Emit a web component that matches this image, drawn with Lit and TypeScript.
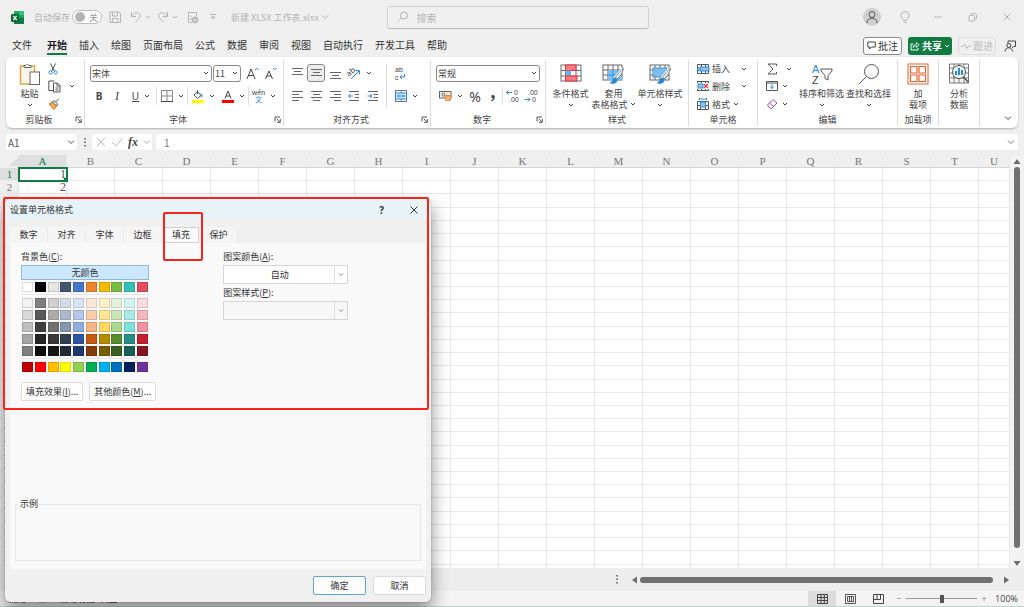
import { LitElement, html, svg, css, nothing } from "lit";
import { customElement } from "lit/decorators.js";
import { classMap } from "lit/directives/class-map.js";

const icon = (w: number, h: number, body: unknown) =>
  html`<svg class="icon" width=${w} height=${h} viewBox="0 0 ${w} ${h}" aria-hidden="true">${body}</svg>`;

const chev = () => icon(6, 6, svg`<path d="M1 2l2 2 2-2" fill="none" stroke="currentColor"/>`);
const bigChev = () => icon(8, 8, svg`<path d="M1 2.500l3 3 3-3" fill="none" stroke="currentColor"/>`);

const G = "#666";
const B = "#2b88d8";

const lines = (rows: number[][]) =>
  icon(12, 12, svg`${rows.map(([x, y, w]) => svg`<path d="M${x} ${y}h${w}" stroke=${G} />`)}`);

const gridLines = svg`<rect x="1" y="1" width="19" height="15" fill="#fff" stroke=${G}/><path d="M1 6h19M1 11h19M6 1v15M11 1v15M16 1v15" stroke=${G} fill="none"/>`;
const brush = svg`<path d="M21 5l-8 10" stroke="#fff" stroke-width="4"/><path d="M21.500 4.500c-3 2-6 6-8 9l1.500 1.500c3-3 6-7 6.500-10.500z" fill="#fff" stroke="#555" stroke-width=".8"/><path d="M13.500 13.500c-3 .5-2.500 4-6 5.500 3 1.500 8 1 8-3.500z" fill=${B}/>`;

const art = {
  excel: () => icon(13, 13, svg`<rect x="3" y="0" width="10" height="13" rx="1" fill="#21a366"/><path d="M8 0h4l1 1v3H8z" fill="#33c481"/><path d="M3 7h10v5q0 1-1 1H4q-1 0-1-1z" fill="#107c41"/><rect x="0" y="3" width="8" height="8" rx="1" fill="#0b6b38"/><path d="M2.300 4.800l3.400 4.400M5.700 4.800L2.300 9.200" stroke="#fff" stroke-width="1.200"/>`),
  save: () => icon(12, 12, svg`<path d="M1 1h9l1.500 1.500v9H1zM3.500 1v4h5V1M3.500 11.500V7.500h5.500v4" fill="none" stroke="currentColor"/>`),
  undo: () => icon(12, 12, svg`<path d="M1.500 1v4.500H6M1.800 5C5 .5 10 1 10.300 4.500c.2 2.500-2.300 4-4.800 6.500" fill="none" stroke="currentColor"/>`),
  redo: () => icon(12, 12, svg`<path d="M10.500 1v4.500H6M10.200 5C7 .5 2 1 1.700 4.500c-.2 2.500 2.300 4 4.800 6.500" fill="none" stroke="currentColor"/>`),
  docView: () => icon(12, 13, svg`<path d="M5 11.500H1.500v-10h8v4" fill="none" stroke="currentColor"/><path d="M3 5h2M3 8h2" stroke="currentColor"/><circle cx="8" cy="9" r="2.500" fill="none" stroke="currentColor" stroke-width="1.500"/><path d="M4.500 9h7M8 5.500v7" stroke="currentColor" stroke-width=".6"/>`),
  custom: () => icon(6, 6, svg`<path d="M0 .5h6M1 3l2 2 2-2z" fill="none" stroke="currentColor"/>`),
  search: () => icon(12, 12, svg`<circle cx="7" cy="4.500" r="3.500" fill="none" stroke="currentColor"/><path d="M4.500 7L1 10.500" stroke="currentColor"/>`),
  user: () => icon(18, 18, svg`<circle cx="9" cy="9" r="9" fill="#cfcfcf"/><circle cx="9" cy="6.500" r="3" fill="none" stroke="#555"/><path d="M4 15c0-6.500 10-6.500 10 0" fill="none" stroke="#555"/>`),
  bulb: () => icon(10, 13, svg`<path d="M3.500 9.500C3.300 7.500 1 7 1 4.500a4 4 0 0 1 8 0C9 7 6.700 7.500 6.500 9.500zM3.500 11.500h3" fill="none" stroke="currentColor"/>`),
  min: () => icon(8, 8, svg`<path d="M0 4h8" stroke="currentColor"/>`),
  restore: () => icon(9, 9, svg`<rect x="1" y="2.500" width="5.500" height="5.500" rx="1" fill="none" stroke="currentColor"/><path d="M3 2.500V1.500q0-1 1-1h2.500q2 0 2 2V5q0 1-1 1h-1" fill="none" stroke="currentColor"/>`),
  close: () => icon(8, 8, svg`<path d="M.5.5l7 7M7.500.5l-7 7" stroke="currentColor"/>`),
  comment: () => icon(9, 9, svg`<path d="M.8 1h7.500v5H4.500L2.500 8V6H.8z" fill="none" stroke="#444"/>`),
  share: () => icon(10, 10, svg`<path d="M3.500 3H1v6h7V7" fill="none" stroke="#fff"/><path d="M3 6.500C3.500 4 5 3.500 6.500 3.500V1.500L9.200 4 6.500 6.500v-1.500Q4.500 5 3 6.500z" fill="none" stroke="#fff" stroke-width=".8"/>`),
  pulse: () => icon(10, 8, svg`<path d="M0 4.500h2L3.500 2l2.500 4.500L7.500 4H10" fill="none" stroke="currentColor"/>`),
  present: () => icon(12, 12, svg`<path d="M4 3.500V1h7.500v5.500H9.500L8 8" fill="none" stroke="#444"/><circle cx="4.800" cy="5.500" r="2" fill="none" stroke="#444"/><path d="M1 11.500c0-5 7.500-5 7.500 0" fill="none" stroke="#444"/>`),
  paste: () => icon(22, 23, svg`<rect x="1.500" y="3" width="14" height="18" fill="#fdf6ec" stroke="#e9a23b" stroke-width="1.500"/><path d="M5 4V2.500h2q1.500-3 3 0h2V4.500H5z" fill="#fff" stroke=${G}/><rect x="11" y="9" width="9.500" height="12.500" fill="#fff" stroke=${G}/>`),
  cut: () => icon(10, 12, svg`<path d="M2.500.5l4 8M7.500.5l-4 8" stroke="#555"/><circle cx="2.500" cy="9.500" r="1.600" fill="none" stroke=${B}/><circle cx="7.500" cy="9.500" r="1.600" fill="none" stroke=${B}/>`),
  copy: () => icon(13, 13, svg`<path d="M5 10.500H.8V1h5.700" fill="none" stroke="#555"/><path d="M5.500 3h4l2.500 2.500v6.500H5.500zM9 3v3h3M7.500 8h3M7.500 10h3" fill="none" stroke="#555"/>`),
  painter: () => icon(12, 12, svg`<path d="M1 6l5 5.500 3-4-4-4z" fill="#f4a85e" stroke="#e0701a"/><path d="M4.500 4L6 2.500 9.500 6 8.500 8zM7.500 4l3.500-3.500" fill="#fff" stroke="#555"/>`),
  grow: (up: boolean) => icon(13, 13, svg`<path d="${up ? "M1 12L5 2l4 10M2.300 8.500h5.400" : "M1.500 12L5 4l3.500 8M2.700 9h4.600"}" fill="none" stroke="#444"/><path d="${up ? "M9 3l1.800-1.800L12.500 3" : "M9 1l1.800 1.800L12.500 1"}" fill="none" stroke=${B}/>`),
  border: () => icon(12, 12, svg`<path d="M.5.5h11M.5.5v11M11.500.5v11M6 .5v11M.5 6h11" stroke="#888"/><path d="M0 11.500h12" stroke="#444"/>`),
  fill: () => icon(12, 13, svg`<path d="M5.500 1.500L9 5.500 5.500 8.500 2 5z" fill="#fff" stroke="#555"/><path d="M5.500 0v4" stroke="#555"/><path d="M8.500 3q3 1.500 1.500 5-1-1.500-1-3z" fill=${B}/><rect x="0" y="10" width="12" height="3" fill="#ff0"/>`),
  fontColor: () => icon(12, 13, svg`<path d="M3 8.500L6 1l3 7.500M4 6h4" fill="none" stroke="#444"/><rect x="0" y="10" width="12" height="3" fill="#f00"/>`),
  orient: () => icon(13, 13, svg`<text x="-1" y="7" font-size="8" transform="rotate(-40 4 6)" fill="#444" font-family="Noto Sans">ab</text><path d="M3 12L11 4M7.500 3.500H11.500V7.500" fill="none" stroke=${B}/>`),
  wrap: () => icon(12, 14, svg`<text x="1" y="6" font-size="7" fill="#444" font-family="Liberation Sans">ab</text><text x="1" y="14" font-size="7" fill="#444" font-family="Liberation Sans">c</text><path d="M10.500 8v3H6M8 9l-2 2 2 2" fill="none" stroke=${B}/>`),
  merge: () => icon(12, 12, svg`<rect x=".5" y=".5" width="11" height="11" fill="#fff" stroke="#777"/><path d="M6 .5v11" stroke="#777"/><rect x=".5" y="3" width="11" height="6" fill="#cfe6fa" stroke=${B}/><path d="M2.500 6h7M4 4.500L2.500 6 4 7.500M8 4.500L9.500 6 8 7.500" fill="none" stroke=${B}/>`),
  indent: (out: boolean) => icon(12, 12, svg`<path d="M1 1.500h10M6.500 4.500H11M6.500 7.500H11M1 10.500h10" stroke=${G}/><path d="${out ? "M.5 6H5M2.500 4L.5 6l2 2" : "M.5 6H5M3 4l2 2-2 2"}" fill="none" stroke=${B}/>`),
  money: () => icon(13, 12, svg`<rect x=".5" y="1.500" width="11.500" height="6.500" fill="#eee" stroke=${G}/><circle cx="4.500" cy="4.700" r="1.500" fill="none" stroke=${G}/><rect x="6" y="5" width="6" height="6" rx="1.500" fill="#f0862b"/><path d="M7 7.200h4M7 9.200h4" stroke="#fff" stroke-width=".7"/>`),
  dec: (left: boolean) => icon(12, 14, svg`<text x=${left ? 8 : 4} y="6" font-size="7" fill="#444" font-family="Liberation Sans">${left ? "0" : ".00"}</text><text x=${left ? 3 : 8} y="13" font-size="7" fill="#444" font-family="Liberation Sans">${left ? ".00" : "0"}</text><path d="${left ? "M.5 3.500H6M2.500 1.500l-2 2 2 2" : "M.5 10.500H6M4 8.500l2 2-2 2"}" fill="none" stroke=${B}/>`),
  cond: () => icon(22, 20, svg`<rect x="1" y="1" width="20" height="16" fill="#fff" stroke=${G}/><path d="M1 6.500h20M1 12h20M5.500 1v16M16 1v16" stroke=${G}/><rect x="5.500" y="1" width="10.500" height="5.500" fill="#ff7a80" stroke="#d9363e"/><rect x="5.500" y="6.500" width="5.500" height="5.500" fill="#6cb3ee"/><rect x="5.500" y="12" width="11.500" height="5" fill="#ff7a80" stroke="#d9363e"/>`),
  tableStyle: () => icon(23, 20, svg`${gridLines}<rect x="6" y="6" width="14" height="10" fill="#7dbcf0"/><path d="M6 11h14M11 6v10M16 6v10" stroke=${B} stroke-width=".7"/>${brush}`),
  cellStyle: () => icon(23, 20, svg`${gridLines}<rect x="4" y="4" width="14" height="9" fill="#7dbcf0" stroke="#4a94d0"/>${brush}`),
  insert: () => icon(12, 12, svg`<path d="M.5 1.500h11v9H.5zM4.500 1.500v9M8.500 1.500v9" fill="none" stroke="#555"/><rect x="3" y="4" width="9" height="4" fill="#8cc5f2" stroke=${B}/><path d="M4 6H0M2 4L0 6l2 2" fill="none" stroke=${B}/>`),
  remove: () => icon(12, 12, svg`<path d="M.5 1.500h11M.5 10.500h11M.5 1v2M4.500 1v2M8.500 1v2M.5 9v2M4.500 9v2M8.500 9v2M11.500 1v2M11.500 9v2" stroke="#555"/><rect x="1" y="4" width="5" height="4" fill="#8cc5f2" stroke=${B}/><path d="M7 4l4 4M11 4L7 8" stroke="#e03a3e" stroke-width="1.200"/>`),
  format: () => icon(12, 12, svg`<path d="M.5 3.500h11v8H.5zM3.500 3.500v8M8.500 3.500v8M.5 7.500h11" fill="none" stroke="#555"/><rect x="3.500" y="4" width="5" height="5" fill="#8cc5f2" stroke=${B}/><path d="M2.500 1h7M2.500 0v2M9.500 0v2" stroke=${B}/>`),
  sigma: () => icon(12, 12, svg`<path d="M10.500 3V1H2l5 5-5 5h8.500V9" fill="none" stroke="#555"/>`),
  fillDown: () => icon(12, 12, svg`<path d="M.5 1.500h11v9H.5zM.5 3h11" fill="none" stroke="#555"/><path d="M6 4v4.500M4 6.500l2 2 2-2" fill="none" stroke=${B}/>`),
  eraser: () => icon(12, 12, svg`<path d="M1.500 7L7 1.500 11 5 5.500 10.500H4zM3.500 5L8 9" fill="#fff" stroke="#a64bb8"/>`),
  sort: () => icon(22, 22, svg`<text x="1" y="10" font-size="11" fill=${B} font-family="Liberation Sans">A</text><text x="1" y="21" font-size="11" fill="#444" font-family="Liberation Sans">Z</text><path d="M10 6h11v2l-4 4.500V17l-3-1.500v-3L10 8z" fill="none" stroke="#555"/>`),
  find: () => icon(22, 22, svg`<circle cx="13.500" cy="8.500" r="7" fill="#fbfbfb" stroke="#555"/><path d="M8.500 13.500L1 21" stroke="#555"/>`),
  addin: () => icon(22, 22, svg`<rect x="1" y="1" width="20" height="20" fill="#fff" stroke="#e8602c"/><path d="M3.500 3.500h6.500v6.500H3.500zM12 3.500h6.500v6.500H12zM3.500 12h6.500v6.500H3.500zM12 12h6.500v6.500H12z" fill="none" stroke="#e8602c" stroke-width="1.200"/>`),
  analyze: () => icon(22, 22, svg`<path d="M1.500 1h19v19h-19zM1.500 5h19M1.500 10h19M1.500 15h19M6 1v19M11 1v19M16 1v19" fill="#fff" stroke="#777"/><circle cx="11" cy="9" r="6.500" fill="#f3f8fc" stroke="#555"/><path d="M8 8v4M11 5v7M14 7v5" stroke=${B} stroke-width="2"/><path d="M15.500 14l5 5.500" stroke="#555" stroke-width="1.500"/>`),
  launcher: () => icon(7, 7, svg`<path d="M1 5.500V1h5M2.800 2.800L6 6M6.300 3v3.300H3" fill="none" stroke="#555"/>`),
  dots: () => icon(2, 9, svg`<path d="M1 0v9" stroke="#555" stroke-width="1.500" stroke-dasharray="1.500 2"/>`),
  cancel: () => icon(10, 10, svg`<path d="M1 1l8 8M9 1L1 9" stroke="#bbb"/>`),
  ok: () => icon(12, 10, svg`<path d="M1 5l4 4 6.500-8" fill="none" stroke="#bbb"/>`),
  corner: () => icon(10, 9, svg`<path d="M10 0v9H0z" fill="#dcdcdc"/>`),
  tri: (d: string) => icon(8, 8, svg`<path d=${d} fill="#6b6b6b"/>`),
  viewGrid: () => icon(11, 10, svg`<path d="M.5.5h10v9H.5zM.5 3.500h10M.5 6.500h10M4 .5v9M7.300.5v9" fill="none" stroke="#444"/>`),
  viewPage: () => icon(11, 10, svg`<path d="M.5.5h10v9H.5zM2.500 2.500h6v5h-6zM4.500 2.500v5M6.500 2.500v5" fill="none" stroke="#555"/>`),
  viewBreak: () => icon(11, 10, svg`<path d="M.5.5h10v9H.5zM.5 5.500h7v-5M4 .5v5" fill="none" stroke="#444"/>`),
};

const menus = ["文件", "开始", "插入", "绘图", "页面布局", "公式", "数据", "审阅", "视图", "自动执行", "开发工具", "帮助"];
const columns = [..."ABCDEFGHIJKLMNOPQRSTU"];
const rowNumbers = Array.from({ length: 30 }, (_, i) => i + 1);

const themeTop = ["#ffffff", "#000000", "#e7e6e6", "#44546a", "#4874cb", "#ee822f", "#f2ba02", "#75bd42", "#30c0b4", "#e54c5e"];
const themeTints = [
  ["#f2f2f2", "#7f7f7f", "#d0cece", "#d6dce5", "#dae3f5", "#fce6d5", "#fff2ca", "#e3f2d9", "#d3f5f2", "#fadbdf"],
  ["#d8d8d8", "#595959", "#aeabab", "#adb9ca", "#b6c7ea", "#f8cdac", "#ffe694", "#c8e5b3", "#a7ebe6", "#f5b7bf"],
  ["#bfbfbf", "#3f3f3f", "#757070", "#8497b0", "#91acdf", "#f5b482", "#ffd95f", "#acd78e", "#7be1d9", "#ef949e"],
  ["#a5a5a5", "#262626", "#3a3838", "#333f50", "#2e54a1", "#c55a11", "#b68b02", "#588e31", "#249087", "#c81d31"],
  ["#7f7f7f", "#0c0c0c", "#171616", "#222a35", "#1f386b", "#843c0b", "#795d01", "#3a5f21", "#18605a", "#851321"],
];
const standard = ["#c00000", "#ff0000", "#ffc000", "#ffff00", "#92d050", "#00b050", "#00b0f0", "#0070c0", "#002060", "#7030a0"];

const shared = css`
  :host, * { box-sizing: border-box; }
  button, select, input {
    font: inherit; color: inherit; background: none; border: 0; margin: 0; padding: 0;
    appearance: none; border-radius: 0; min-width: 0; outline: none;
  }
  button { display: flex; align-items: center; justify-content: center; white-space: nowrap; }
  .icon { display: block; flex: none; overflow: visible; }
  .pick { display: grid; align-items: center; background: #fff; }
  .pick > select { grid-area: 1 / 1; width: 100%; height: 100%; }
  .pick > .icon { grid-area: 1 / 1; justify-self: end; margin-right: 2px; pointer-events: none; }
`;

@customElement("title-bar")
class TitleBar extends LitElement {
  static styles = [shared, css`
    :host { display: grid; grid-template-columns: 1fr minmax(120px, 262px) 1fr; align-items: center; height: 34px; padding-left: 11px; color: #b4b4b4; font-size: 9px; }
    .side { display: flex; align-items: center; white-space: nowrap; min-width: 0; }
    .auto { display: flex; align-items: center; gap: 2px; margin: 0 7px 0 10px; }
    .toggle { width: 30px; height: 14px; border: 1px solid #bcbcbc; border-radius: 7px; background: #fff; justify-content: flex-start; gap: 4px; padding-left: 2px; color: #999; }
    .knob { width: 10px; height: 10px; border-radius: 5px; background: #b5b5b5; }
    .save { margin-right: 9px; }
    .pair { display: flex; gap: 3px; margin-right: 6px; align-items: center; }
    .doc { margin: 0 11px 0 3px; }
    .name { display: flex; align-items: center; gap: 2px; margin-left: 15px; }
    .search { display: flex; align-items: center; gap: 8px; height: 23px; border: 1px solid #d2d2d2; border-bottom-color: #bbb; border-radius: 3px; padding: 0 9px; font-size: 10px; background: #f0f0f0; }
    .search input { flex: 1; }
    .search input::placeholder { color: #b4b4b4; opacity: 1; }
    .right { justify-content: flex-end; padding-right: 13px; gap: 26px; }
    .user { margin-right: -7px; }
    .user + button { margin-right: -2px; }
  `];
  render() {
    return html`
      <div class="side">
        ${art.excel()}
        <div class="auto"><span id="auto">自动保存</span>
          <button class="toggle" role="switch" aria-checked="false" aria-labelledby="auto"><span class="knob"></span>关</button></div>
        <button class="save" aria-label="保存">${art.save()}</button>
        <button class="pair" aria-label="撤消">${art.undo()}${chev()}</button>
        <button class="pair" aria-label="恢复">${art.redo()}${chev()}</button>
        <button class="doc" aria-label="预览">${art.docView()}</button>
        <button aria-label="自定义">${art.custom()}</button>
        <button class="name">新建 XLSX 工作表.xlsx ${bigChev()}</button>
      </div>
      <label class="search">${art.search()}<input type="text" placeholder="搜索" aria-label="搜索" /></label>
      <div class="side right">
        <button class="user" aria-label="帐户">${art.user()}</button>
        <button aria-label="提示">${art.bulb()}</button>
        <button aria-label="最小化">${art.min()}</button>
        <button aria-label="还原">${art.restore()}</button>
        <button aria-label="关闭">${art.close()}</button>
      </div>`;
  }
}

@customElement("menu-bar")
class MenuBar extends LitElement {
  static styles = [shared, css`
    :host { display: flex; align-items: center; justify-content: space-between; height: 23px; padding: 0 8px 0 12px; font-size: 10px; color: #333; }
    nav { display: flex; gap: 12px; }
    nav button { height: 18px; line-height: 16px; border-bottom: 2px solid transparent; }
    nav button:first-child { margin-right: 3px; }
    nav .on { font-weight: 700; border-color: #107c41; color: #222; }
    .tools { display: flex; align-items: center; gap: 6px; }
    .tools button { height: 18px; border-radius: 3px; gap: 2px; padding: 0 2px; }
    .tools .note { background: #fff; border: 1px solid #8a8a8a; padding: 0 3px; }
    .tools .share { background: #107c41; color: #fff; font-weight: 700; }
    .tools .follow { border: 1px solid #dcdcdc; color: #bdbdbd; }
    .tools .show { padding: 0; margin-left: 2px; }
  `];
  render() {
    return html`
      <nav>${menus.map((m) => html`<button class=${classMap({ on: m === "开始" })}>${m}</button>`)}</nav>
      <div class="tools">
        <button class="note">${art.comment()}批注</button>
        <button class="share">${art.share()}共享${chev()}</button>
        <button class="follow" disabled>${art.pulse()}跟进</button>
        <button class="show" aria-label="演示">${art.present()}</button>
      </div>`;
  }
}

const center = [[1, 1.5, 11], [3, 4.5, 7], [1, 7.5, 11], [3, 10.5, 7]];

@customElement("ribbon-bar")
class RibbonBar extends LitElement {
  static styles = [shared, css`
    :host { display: flex; margin: 0 6px; height: 71px; background: #fff; border-radius: 6px; box-shadow: 0 1px 2px #0004; font-size: 9px; color: #444; line-height: 11px; padding: 3px 0 2px; }
    section { display: flex; flex-direction: column; border-right: 1px solid #dcdcdc; flex: none; }
    .body { flex: 1; display: flex; min-height: 0; }
    footer { display: flex; align-items: center; height: 13px; }
    footer span { flex: 1; text-align: center; }
    footer button { width: 12px; }
    .clip { width: 79px; } .font { width: 199px; } .align { width: 147px; } .num { width: 115px; }
    .styles { width: 143px; } .cells { width: 69px; } .edit { width: 140px; } .add { width: 41px; }
    .end { flex: 1; display: flex; justify-content: flex-end; align-items: flex-end; padding: 0 6px 4px; }
    .big { flex-direction: column; justify-content: flex-start; padding-top: 3px; }
    .big .icon:first-child { margin-bottom: 2px; }
    .big > .icon:last-child:not(:first-child) { margin-top: 3px; }
    .big span { display: flex; align-items: center; gap: 2px; }
    .fixed { height: 23px; display: flex; align-items: center; margin-bottom: 2px; }
    .stack { display: flex; flex-direction: column; justify-content: space-around; }
    .stack button { height: 17px; justify-content: flex-start; gap: 3px; }
    .rows { display: flex; flex-direction: column; gap: 5px; padding-top: 4px; }
    .row { display: flex; align-items: center; height: 18px; }
    .row button { width: 18px; height: 18px; }
    .row .w { width: 30px; gap: 5px; }
    .pick { height: 17px; border: 1px solid #8a8a8a; border-radius: 3px; }
    .pick > select { padding-left: 1px; }
    .sep { width: 1px; height: 18px; background: #dcdcdc; flex: none; }
    .tall { height: 44px; margin: 4px 4px 0; }
    .row .framed { background: #ececec; border: 1px solid #888; border-radius: 3px; }
    .row .b { font: 700 10px "Noto Sans"; } .row .i { font: italic 12px "Liberation Serif"; } .u { text-decoration: underline; font-family: "Noto Sans"; font-size: 10px; }
    .row .pct { font: 14px "Noto Sans"; } .row .comma { font: 700 20px "Liberation Serif"; padding-bottom: 9px; }
    .pinyin { display: flex; flex-direction: column; font-size: 7px; line-height: 7px; }
    .pinyin em { font-style: normal; color: #2b88d8; }
    .clip .big { width: 23px; margin-left: 12px; }
    .clip .stack { margin-left: 7px; width: 34px; }
    .clip .stack .w { gap: 8px; }
    .font .rows, .num .rows { padding-left: 5px; }
    .family { width: 122px; margin-right: 1px; } .size { width: 28px; margin-right: 2px; }
    .align .rows { padding-left: 4px; }
    .align .rows .row { gap: 1px; }
    .align .rows + .tall + .rows { padding-left: 0; }
    .format { width: 104px; }
    .styles .body { padding-left: 3px; }
    .styles .big { width: 43px; } .styles .big:last-child { width: 50px; }
    .cells .body { padding-left: 8px; }
    .cells .stack .wide > .icon:last-child { margin-left: 8px; }
    .edit .body { padding-left: 8px; }
    .edit .stack { width: 32px; }
    .edit .stack button { gap: 4px; }
    .edit .stack button:first-child { gap: 8px; }
    .edit .big { width: 47px; }
    .add .big { width: 40px; }
  `];
  private foot(name: string, launch = false) {
    return html`<footer><span>${name}</span>${launch ? html`<button aria-label="${name}设置">${art.launcher()}</button>` : nothing}</footer>`;
  }
  render() {
    return html`
      <section class="clip"><div class="body">
        <button class="big">${art.paste()}<span>粘贴</span>${chev()}</button>
        <div class="stack">
          <button aria-label="剪切">${art.cut()}</button>
          <button class="w" aria-label="复制">${art.copy()}${chev()}</button>
          <button aria-label="格式刷">${art.painter()}</button>
        </div></div>${this.foot("剪贴板", true)}</section>

      <section class="font"><div class="body"><div class="rows">
        <div class="row">
          <div class="pick family"><select aria-label="字体"><option>宋体</option></select>${chev()}</div>
          <div class="pick size"><select aria-label="字号"><option>11</option></select>${chev()}</div>
          <button aria-label="增大字号">${art.grow(true)}</button>
          <button aria-label="减小字号">${art.grow(false)}</button>
        </div>
        <div class="row">
          <button class="b">B</button><button class="i">I</button>
          <button class="w"><span class="u">U</span>${chev()}</button><div class="sep"></div>
          <button class="w" aria-label="边框">${art.border()}${chev()}</button><div class="sep"></div>
          <button class="w" aria-label="填充颜色">${art.fill()}${chev()}</button>
          <button class="w" aria-label="字体颜色">${art.fontColor()}${chev()}</button><div class="sep"></div>
          <button class="w"><span class="pinyin">wén<em>文</em></span>${chev()}</button>
        </div></div></div>${this.foot("字体", true)}</section>

      <section class="align"><div class="body">
        <div class="rows">
          <div class="row">
            <button aria-label="顶端对齐">${lines([[1, 1.5, 11], [3, 4.5, 7], [1, 7.5, 11]])}</button>
            <button class="framed" aria-label="垂直居中">${lines([[1, 2.5, 11], [3, 5.5, 7], [1, 8.5, 11]])}</button>
            <button aria-label="底端对齐">${lines([[1, 5.5, 11], [3, 8.5, 7], [1, 11.5, 11]])}</button>
            <button class="w" aria-label="方向">${art.orient()}${chev()}</button>
          </div>
          <div class="row">
            <button aria-label="左对齐">${lines([[1, 1.5, 11], [1, 4.5, 7], [1, 7.5, 11], [1, 10.5, 7]])}</button>
            <button aria-label="居中">${lines(center)}</button>
            <button aria-label="右对齐">${lines([[1, 1.5, 11], [5, 4.5, 7], [1, 7.5, 11], [5, 10.5, 7]])}</button>
            <button aria-label="减少缩进量">${art.indent(true)}</button>
            <button aria-label="增加缩进量">${art.indent(false)}</button>
          </div></div>
        <div class="sep tall"></div>
        <div class="rows">
          <div class="row"><button aria-label="自动换行">${art.wrap()}</button></div>
          <div class="row"><button class="w" aria-label="合并后居中">${art.merge()}${chev()}</button></div>
        </div></div>${this.foot("对齐方式", true)}</section>

      <section class="num"><div class="body"><div class="rows">
        <div class="row"><div class="pick format"><select aria-label="数字格式"><option>常规</option></select>${chev()}</div></div>
        <div class="row">
          <button class="w" aria-label="会计格式">${art.money()}${chev()}</button>
          <button class="pct">%</button><button class="comma">,</button><div class="sep"></div>
          <button aria-label="增加小数位数">${art.dec(true)}</button>
          <button aria-label="减少小数位数">${art.dec(false)}</button>
        </div></div></div>${this.foot("数字", true)}</section>

      <section class="styles"><div class="body">
        <button class="big"><div class="fixed">${art.cond()}</div><span>条件格式</span>${chev()}</button>
        <button class="big"><div class="fixed">${art.tableStyle()}</div><span>套用</span><span>表格格式${chev()}</span></button>
        <button class="big"><div class="fixed">${art.cellStyle()}</div><span>单元格样式</span>${chev()}</button>
      </div>${this.foot("样式")}</section>

      <section class="cells"><div class="body"><div class="stack">
        <button class="wide">${art.insert()}插入 ${chev()}</button>
        <button class="wide">${art.remove()}删除 ${chev()}</button>
        <button>${art.format()}格式${chev()}</button>
      </div></div>${this.foot("单元格")}</section>

      <section class="edit"><div class="body"><div class="stack">
        <button aria-label="求和">${art.sigma()}${chev()}</button>
        <button aria-label="填充">${art.fillDown()}${chev()}</button>
        <button aria-label="清除">${art.eraser()}${chev()}</button></div>
        <button class="big"><div class="fixed">${art.sort()}</div><span>排序和筛选</span>${chev()}</button>
        <button class="big"><div class="fixed">${art.find()}</div><span>查找和选择</span>${chev()}</button>
      </div>${this.foot("编辑")}</section>

      <section class="add"><div class="body"><button class="big"><div class="fixed">${art.addin()}</div><span>加</span><span>载项</span></button></div>${this.foot("加载项")}</section>
      <section class="add"><div class="body"><button class="big"><div class="fixed">${art.analyze()}</div><span>分析</span><span>数据</span></button></div>${this.foot("")}</section>
      <div class="end"><button aria-label="折叠功能区">${bigChev()}</button></div>`;
  }
}

@customElement("formula-bar")
class FormulaBar extends LitElement {
  static styles = [shared, css`
    :host { display: flex; align-items: center; margin: 6px 6px 5px; height: 16px; font-size: 10px; color: #555; }
    .box { background: #fff; border-radius: 3px; height: 16px; display: flex; align-items: center; }
    .name { width: 71px; padding: 0 2px; }
    .name input, .text input { flex: 1; }
    .dots { width: 15px; display: flex; justify-content: center; }
    .acts { width: 60px; justify-content: space-between; padding: 0 1px 0 4px; margin-right: 4px; color: #aaa; }
    .acts .fx { font: italic 700 12px "Liberation Serif"; color: #444; }
    .text { flex: 1; padding: 0 3px 0 8px; color: #777; }
  `];
  render() {
    return html`
      <div class="box name"><input aria-label="名称框" .value=${"A1"} />${bigChev()}</div>
      <div class="dots">${art.dots()}</div>
      <div class="box acts"><button aria-label="取消">${art.cancel()}</button><button aria-label="输入">${art.ok()}</button><button class="fx">fx</button>${bigChev()}</div>
      <div class="box text"><input aria-label="编辑栏" .value=${"1"} />${bigChev()}</div>`;
  }
}

@customElement("sheet-grid")
class SheetGrid extends LitElement {
  static styles = [shared, css`
    :host { display: grid; grid-template-columns: 1fr 14px; grid-template-rows: minmax(0, 1fr) 23px; min-height: 0; flex: 1; }
    .view { overflow: hidden; background: #fff; }
    table { width: 100%; height: 100%; table-layout: fixed; border-collapse: separate; border-spacing: 0; font: 12px/12px "Liberation Serif", "Noto Sans CJK SC", serif; color: #555; }
    th, td { padding: 0; overflow: hidden; border-right: 1px solid #e8e8e8; border-bottom: 1px solid #e8e8e8; font-weight: 400; }
    th { font-size: 11px; background: #efefef; color: #777; }
    thead th { height: 13px; border-bottom-color: #d5d5d5; }
    tbody th { padding-left: 1px; }
    thead .on, tbody .on { background: #dedede; color: #107c41; }
    thead .corner { border: 0; }
    .corner .icon { margin-left: auto; }
    td { text-align: right; }
    .sel { position: relative; overflow: visible; outline: 2px solid #107c41; outline-offset: -1px; }
    .handle { position: absolute; right: -2px; bottom: -2px; width: 4px; height: 4px; background: #107c41; }
    .rest td, .rest th { height: 3px; border-bottom: 0; }
    .head { width: 19px; } .col { width: 48px; }
    .vbar { display: flex; flex-direction: column; align-items: center; padding: 2px 0 1px; gap: 2px; background: #f2f2f2; }
    .vthumb { flex: 1; width: 6px; border-radius: 3px; background: #707070; margin-bottom: 9px; }
    .foot { grid-column: 1 / 3; display: flex; align-items: center; justify-content: flex-end; background: #ededed; padding-right: 14px; }
    .foot .icon:first-child { margin-right: 13px; }
    .hthumb { width: 35%; height: 6px; border-radius: 3px; background: #707070; margin: 0 9px 0 1px; }
  `];
  render() {
    return html`
      <div class="view"><table>
        <colgroup><col class="head" />${columns.map((c) => (c === "U" ? html`<col />` : html`<col class="col" />`))}</colgroup>
        <thead><tr><th class="corner">${art.corner()}</th>${columns.map((c) => html`<th scope="col" class=${classMap({ on: c === "A" })}>${c}</th>`)}</tr></thead>
        <tbody>
          ${rowNumbers.map((r) => html`<tr><th scope="row" class=${classMap({ on: r === 1 })}>${r}</th>${columns.map((c) =>
            c === "A" && r === 1
              ? html`<td class="sel">1<span class="handle"></span></td>`
              : html`<td>${c === "A" && r < 4 ? r : nothing}</td>`)}</tr>`)}
          <tr class="rest"><th></th>${columns.map(() => html`<td></td>`)}</tr>
        </tbody></table></div>
      <div class="vbar">${art.tri("M4 2l3.500 5h-7z")}<div class="vthumb"></div>${art.tri("M4 7l3.500-5h-7z")}</div>
      <div class="foot">${art.dots()}${art.tri("M1 4l5-3.500v7z")}<div class="hthumb"></div>${art.tri("M7 4L2 .5v7z")}</div>`;
  }
}

@customElement("status-bar")
class StatusBar extends LitElement {
  static styles = [shared, css`
    :host { display: flex; align-items: center; height: 16px; padding: 0 6px 0 8px; background: #f3f3f3; border-bottom: 1px solid #c5d0cc; font-size: 9px; color: #444; }
    .left { display: flex; gap: 12px; flex: 1; }
    .views { display: flex; height: 15px; }
    .views button { width: 28px; }
    .views .on { background: #dcdcdc; }
    .zoom { display: flex; align-items: center; gap: 4px; margin-left: 4px; }
    input { width: 71px; height: 8px; background: linear-gradient(#999, #999) center / 100% 1px no-repeat; }
    input::-webkit-slider-thumb { appearance: none; width: 4px; height: 8px; background: #555; }
    .pct { font: 9px "Open Sans", sans-serif; margin-left: 4px; }
    .sign { color: #888; width: 6px; }
  `];
  render() {
    return html`
      <div class="left"><span>就绪</span><span>▣</span><span>辅助功能: 调查</span></div>
      <div class="views"><button class="on" aria-label="普通">${art.viewGrid()}</button><button aria-label="页面布局">${art.viewPage()}</button><button aria-label="分页预览">${art.viewBreak()}</button></div>
      <div class="zoom"><button class="sign">−</button><input type="range" aria-label="缩放" min="0" max="200" .value=${"100"} /><button class="sign">+</button><span class="pct">100%</span></div>`;
  }
}

@customElement("format-dialog")
class FormatDialog extends LitElement {
  static styles = [shared, css`
    :host { display: flex; flex-direction: column; width: 426px; height: 403px; border-radius: 5px; background: #f0f0f0; box-shadow: 0 0 1px #0008, 0 8px 18px #0007; overflow: hidden; font-size: 9px; line-height: 12px; color: #333; }
    header { display: flex; align-items: center; height: 21px; padding: 0 13px 0 5px; background: #e8f3f7; gap: 26px; }
    header h1 { font: inherit; margin: 0; flex: 1; }
    .help { font: 700 10px "Noto Sans"; }
    .tabs { display: flex; padding: 7px 5px 0; }
    .tabs button { width: 38px; height: 16px; background: #f4f4f4; border-right: 1px solid #ececec; }
    .tabs .on { background: #fbfbfb; border: 1px solid #d0d0d0; margin: 0 1px; width: 36px; }
    .panel { flex: 1; margin: 0 5px; background: #f9f9f9; display: flex; flex-direction: column; padding: 8px 5px 8px; }
    .cols { display: flex; gap: 67px; padding-left: 6px; flex: 1; }
    .none { width: 128px; height: 15px; margin: 2px 0 2px; background: #cce8ff; border: 1px solid #90b8d4; }
    .colors { width: 128px; padding: 0 1px; display: grid; grid-template-columns: repeat(10, 11px); justify-content: space-between; gap: 2px 0; }
    .colors + .colors { margin-top: 2px; padding-top: 3px; border-top: 1px solid #e6e6e6; }
    .colors button { height: 10px; border: 1px solid #0002; }
    .more { display: flex; gap: 6px; margin-top: 10px; }
    .push { height: 19px; background: #fdfdfd; border: 1px solid #dcdcdc; border-radius: 2px; padding: 0 4px; }
    .field { display: flex; flex-direction: column; gap: 2px; margin-bottom: 3px; }
    .pick { width: 125px; height: 19px; border: 1px solid #d5d5d5; }
    .pick > select { padding-right: 12px; text-align: center; text-align-last: center; }
    .pick > .icon { border-left: 1px solid #e0e0e0; width: 13px; height: 17px; padding: 0 3px; margin: 0; color: #888; }
    .blank { background: #f7f7f7; }
    fieldset { height: 62px; margin: 0; padding: 0; border: 1px solid #e8e8e8; }
    legend { padding: 0 2px; margin-left: 2px; line-height: 10px; }
    footer { display: flex; justify-content: flex-end; align-items: center; gap: 7px; height: 33px; padding: 0 5px; }
    footer .push { width: 53px; }
    footer .main { border-color: #5ba7e0; }
  `];
  private swatches(list: string[]) {
    return list.map((c) => html`<button aria-label=${c} style="background:${c}"></button>`);
  }
  render() {
    return html`
      <header><h1>设置单元格格式</h1><button class="help">?</button><button aria-label="关闭">${art.close()}</button></header>
      <div class="tabs" role="tablist">${["数字", "对齐", "字体", "边框", "填充", "保护"].map((t) => html`<button role="tab" class=${classMap({ on: t === "填充" })}>${t}</button>`)}</div>
      <div class="panel">
        <div class="cols">
          <div>
            <div>背景色(<u>C</u>):</div>
            <button class="none">无颜色</button>
            <div class="colors">${this.swatches(themeTop)}</div>
            <div class="colors">${this.swatches(themeTints.flat())}</div>
            <div class="colors">${this.swatches(standard)}</div>
            <div class="more"><button class="push">填充效果(<u>I</u>)...</button><button class="push">其他颜色(<u>M</u>)...</button></div>
          </div>
          <div>
            <div class="field"><label for="pc">图案颜色(<u>A</u>):</label><div class="pick"><select id="pc"><option>自动</option></select>${chev()}</div></div>
            <div class="field"><label for="ps">图案样式(<u>P</u>):</label><div class="pick blank"><select id="ps"><option></option></select>${chev()}</div></div>
          </div>
        </div>
        <fieldset><legend>示例</legend></fieldset>
      </div>
      <footer><button class="push main">确定</button><button class="push">取消</button></footer>`;
  }
}

@customElement("app-root")
class AppRoot extends LitElement {
  static styles = css`
    :host { display: flex; flex-direction: column; height: 100vh; position: relative; overflow: hidden; background: #efefef; font-family: "Noto Sans CJK SC", "Noto Sans", sans-serif; }
    format-dialog { position: absolute; left: 5px; top: 199px; }
    .mark { position: absolute; box-sizing: border-box; border: 2px solid #f5241d; border-radius: 2px; pointer-events: none; }
    .outer { left: 3px; top: 197px; width: 426px; height: 213px; }
    .inner { left: 163px; top: 212px; width: 40px; height: 49px; }
  `;
  render() {
    return html`
      <title-bar></title-bar>
      <menu-bar></menu-bar>
      <ribbon-bar></ribbon-bar>
      <formula-bar></formula-bar>
      <sheet-grid></sheet-grid>
      <status-bar></status-bar>
      <format-dialog role="dialog" aria-label="设置单元格格式"></format-dialog>
      <div class="mark outer"></div>
      <div class="mark inner"></div>`;
  }
}
